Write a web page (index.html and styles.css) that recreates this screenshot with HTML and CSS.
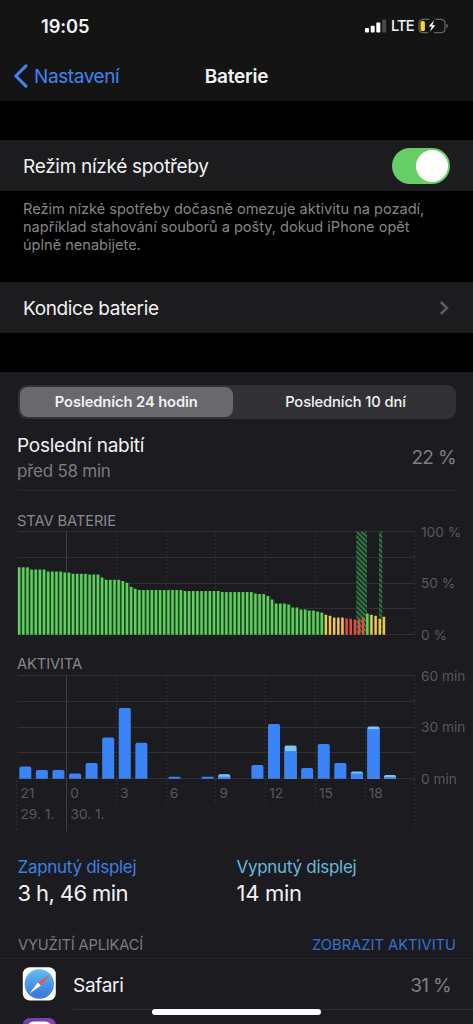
FILE: index.html
```html
<!DOCTYPE html>
<html lang="cs">
<head>
<meta charset="utf-8">
<title>Baterie</title>
<link rel="stylesheet" href="styles.css">
</head>
<body>
<div class="screen">
  <header class="top">
    <div class="status">
      <span class="time">19:05</span>
      <div class="indicators">
        <svg class="signal" width="22" height="14" viewBox="0 0 22 14"><rect x="0" y="9" width="4" height="4.5" rx="1"/><rect x="5.7" y="6.7" width="4" height="6.8" rx="1"/><rect x="11.3" y="3.5" width="4" height="10" rx="1"/><rect class="off" x="17.2" y="0.5" width="4" height="13" rx="1"/></svg>
        <span class="lte">LTE</span>
        <svg class="battery" width="30" height="16" viewBox="0 0 30 16"><path d="M11.5 1.3H5.2Q1 1.3 1 5.2v5.6q0 3.9 4.2 3.900h5M17.500 1.3h5.3Q27 1.3 27 5.2v5.6q0 3.900-4.2 3.900h-6.7" fill="none" stroke="#66655f" stroke-width="1.2"/><path d="M28.4 5.8q1.6.7 1.6 2.2t-1.6 2.2z" fill="#66655f"/><rect x="2.5" y="3" width="4.4" height="10" rx="1.6" fill="#f5d343"/><path d="M16.2 2.2L10.6 8.6h3.2L12 13.8l5.4-6.5h-3.1z" fill="#fff"/></svg>
      </div>
    </div>
    <nav class="nav">
      <a class="back"><svg width="16" height="26" viewBox="0 0 16 26"><path d="M13 2.8L2.8 13 13 23.2" fill="none" stroke="#3f85f0" stroke-width="3.1" stroke-linecap="round" stroke-linejoin="round"/></svg><span class="back-label">Nastavení</span></a>
      <h1 class="title">Baterie</h1>
      <span></span>
    </nav>
  </header>

  <section class="cell power">
    <span class="power-label">Režim nízké spotřeby</span>
    <span class="toggle"><span class="knob"></span></span>
  </section>
  <p class="note">Režim nízké spotřeby dočasně omezuje aktivitu na pozadí,<br>například stahování souborů a pošty, dokud iPhone opět<br>úplně nenabijete.</p>
  <section class="cell health">
    <span class="health-label">Kondice baterie</span>
    <svg width="10" height="16" viewBox="0 0 10 16"><path d="M1.800 2L8 8l-6.200 6" fill="none" stroke="#5c5c60" stroke-width="2.500"/></svg>
  </section>

  <main class="usage">
    <div class="segments">
      <span class="segment selected">Posledních 24 hodin</span>
      <span class="segment other">Posledních 10 dní</span>
    </div>
    <div class="charge">
      <div class="charge-text"><span class="charge-title">Poslední nabití</span><span class="charge-time">před 58 min</span></div>
      <span class="percent charge-level">22 %</span>
    </div>
    <h2 class="heading level-heading">STAV BATERIE</h2>
    <svg class="chart" id="level" width="473" height="116" viewBox="0 526 473 116"></svg>
    <h2 class="heading activity-heading">AKTIVITA</h2>
    <svg class="chart" id="activity" width="473" height="164" viewBox="0 669 473 164"></svg>
    <div class="totals">
      <div class="total"><span class="total-label on">Zapnutý displej</span><span class="total-value v1">3 h, 46 min</span></div>
      <div class="total"><span class="total-label off">Vypnutý displej</span><span class="total-value v2">14 min</span></div>
    </div>
    <div class="apps-head"><h2 class="apps-title">VYUŽITÍ APLIKACÍ</h2><a class="apps-link">ZOBRAZIT AKTIVITU</a></div>
    <div class="app">
      <svg class="app-icon" width="34" height="34" viewBox="0 0 34 34"><defs><linearGradient id="sky" x1="0" y1="0" x2="0" y2="1"><stop offset="0" stop-color="#62bdf0"/><stop offset="1" stop-color="#3470dc"/></linearGradient></defs><rect x=".8" y=".2" width="33" height="33.400" rx="7" fill="#fff"/><circle cx="17.300" cy="17" r="14.700" fill="url(#sky)"/><circle cx="17.300" cy="17" r="13" fill="none" stroke="#a5d4f5" stroke-width="1.300" stroke-dasharray=".4 1.300" opacity=".5"/><path d="M28 7.500L15.800 15.600l3.100 3z" fill="#e1574e"/><path d="M7.400 26.500l8.400-10.900 3.100 3z" fill="#fff"/></svg>
      <div class="app-row"><span class="app-name">Safari</span><span class="percent app-share">31 %</span></div>
    </div>
    <div class="app next">
      <svg width="34" height="34" viewBox="0 0 34 34"><defs><linearGradient id="violet" x1="0" x2="1"><stop offset="0" stop-color="#6145b0"/><stop offset="1" stop-color="#8b3fb0"/></linearGradient></defs><rect x=".8" width="33" height="34" rx="7" fill="url(#violet)"/><rect x="5.500" y="3.600" width="24" height="26" rx="6" fill="#fff"/></svg>
    </div>
  </main>
  <div class="home"></div>
</div>
<script src="charts.js"></script>
</body>
</html>
```

FILE: styles.css
```css
* { box-sizing: border-box; }
body { margin: 0; background: #000; font-family: Inter, "Liberation Sans", sans-serif; color: #f2f2f4; }
.screen { position: relative; width: 473px; height: 1024px; overflow: hidden; display: flex; flex-direction: column; background: #000; }
h1, h2, p { margin: 0; font-weight: 400; }
span, a, h1, h2 { white-space: nowrap; }
.top { height: 101px; background: #141415; flex: none; }
.status { height: 52px; padding: 0 25px 0 41px; display: flex; justify-content: space-between; align-items: center; }
.time { font-size: 18.300px; font-weight: 600; letter-spacing: -0.1px; }
.indicators { display: flex; align-items: center; }
.signal { fill: #fff; }
.signal .off { fill: #48484a; }
.lte { font-size: 14.700px; font-weight: 500; width: 22px; margin: 0 5px 0 4px; letter-spacing: -0.9px; }
.nav { height: 48px; display: grid; grid-template-columns: 1fr auto 1fr; align-items: center; padding: 0 13px; }
.back { display: flex; align-items: center; gap: 5px; color: #3f85f0; }
.back-label { font-size: 19px; letter-spacing: -0.4px; }
.title { font-size: 19px; font-weight: 600; letter-spacing: -0.2px; }
.cell { flex: none; height: 51px; background: #1c1c1e; display: flex; align-items: center; justify-content: space-between; padding: 0 23px; }
.power { margin-top: 39px; padding-top: 1px; }
.power-label, .health-label { font-size: 19px; letter-spacing: -0.3px; }
.health-label { letter-spacing: -0.35px; padding-top: 1px; }
.toggle { width: 58px; height: 36px; padding: 2px; border-radius: 18px; background: #67cd67; display: flex; justify-content: flex-end; }
.knob { width: 32px; height: 32px; border-radius: 50%; background: #fff; }
.note { flex: none; height: 91px; padding: 9px 23px 0; font-size: 14.600px; line-height: 18px; color: #85858a; letter-spacing: -0.02px; white-space: nowrap; }
.health { padding-right: 24px; }
.usage { flex: 1; margin-top: 39px; background: #1c1b1f; display: flex; flex-direction: column; }
.usage > * { flex: none; }
.segments { margin: 13px 17px 0 18px; height: 34px; padding: 2px 2px 2px 1.500px; border-radius: 9px; background: #323236; display: flex; }
.segment { flex: 1; display: flex; align-items: center; justify-content: center; font-size: 14.700px; font-weight: 500; border-radius: 8px; }
.selected { flex: none; width: 213.500px; height: 30px; font-weight: 600; letter-spacing: -0.08px; background: #69696d; }
.other { padding-left: 4px; letter-spacing: -0.1px; }
.charge { margin: 0 17px 0 18px; height: 72px; border-bottom: 1px solid #2b2b2f; display: flex; align-items: center; justify-content: space-between; }
.charge-text { display: flex; flex-direction: column; padding-top: 6px; margin-left: -1px; }
.charge-title { font-size: 19px; line-height: 26px; letter-spacing: -0.25px; }
.charge-time { font-size: 17px; line-height: 24px; color: #7b7b80; letter-spacing: -0.25px; }
.percent { font-size: 19px; color: #7f7f84; letter-spacing: -0.65px; }
.charge-level { padding-top: 5px; }
.heading { padding-left: 17px; font-size: 14.700px; line-height: 20px; color: #88888d; letter-spacing: -0.1px; }
.level-heading { margin-top: 20px; }
.activity-heading { margin-top: 12px; }
.chart { display: block; overflow: visible; font-size: 13.700px; fill: #58585d; }
.level-heading + .chart { margin-top: -5px; }
.activity-heading + .chart { margin-top: -5px; }
.grid { stroke: #303034; stroke-width: 1; fill: none; }
.dash { stroke-dasharray: 2 2; }
.strong { stroke: #404044; }
.green { fill: #62cd60; } .yellow { fill: #eec84a; } .red { fill: #dc4f40; }
.used { fill: #3b84f7; } .idle { fill: #79c7f5; }
.totals { margin-top: 23px; padding-left: 18px; display: grid; grid-template-columns: 219px 1fr; }
.total { display: flex; flex-direction: column; }
.total-label { font-size: 17px; line-height: 23px; letter-spacing: -0.28px; margin-left: -0.5px; }
.total-label.on { color: #3e80e2; } .total-label.off { color: #69b8de; }
.total-value { font-size: 22px; line-height: 29px; letter-spacing: -0.6px; margin: 0 0 1px -0.5px; }
.v2 { letter-spacing: -0.3px; }
.apps-head { height: 50px; padding: 25px 17px 0 18px; display: flex; justify-content: space-between; border-bottom: 1px solid #27272b; font-size: 14.700px; line-height: 22px; }
.apps-title { font-size: inherit; color: #7c7c81; letter-spacing: -0.16px; }
.apps-link { color: #3572d0; }
.app { display: flex; height: 51px; padding: 8px 0 0 22px; gap: 17px; }
.app-row { flex: 1; display: flex; justify-content: space-between; align-items: center; height: 43px; padding: 0 22px 6px 0; border-bottom: 1px solid #303034; }
.app-name { font-size: 19px; letter-spacing: -0.3px; }
.next { height: 20px; }
.home { position: absolute; left: 152px; top: 1009px; width: 169px; height: 6px; border-radius: 3px; background: #fff; }
```

FILE: charts.js
```js
const NS = "http://www.w3.org/2000/svg";
function add(parent, name, attrs, text) {
  const el = document.createElementNS(NS, name);
  for (const key in attrs) el.setAttribute(key, attrs[key]);
  if (text) el.textContent = text;
  parent.appendChild(el);
  return el;
}
const LEFT = 17.5, HOUR = 16.58, RIGHT = 415;

function grid(svg, top, labels) {
  for (let i = 0; i < 5; i++) add(svg, "path", { class: "grid", d: `M${LEFT} ${top + [0, 26, 52, 77, 103][i]}H${RIGHT}` });
  labels.forEach((t, i) => add(svg, "text", { x: 421, y: top + 5.5 + i * 51.3 }, t));
}

const level = document.getElementById("level");
grid(level, 531.5, ["100 %", "50 %", "0 %"]);
for (let k = 0; k < 8; k++) {
  const x = Math.floor(66.7 + k * 49.75) + 0.5;
  add(level, "path", { class: k ? "grid dash" : "grid strong", d: `M${x} 531V635` });
}
const defs = add(level, "defs", {});
const hatch = add(defs, "pattern", { id: "hatch", width: 5, height: 5, patternUnits: "userSpaceOnUse" });
add(hatch, "rect", { width: 5, height: 5, fill: "#1d2f25" });
add(hatch, "path", { d: "M-1 -1L6 6M-1 4L1 6M4 -1L6 1", stroke: "#307c3c", "stroke-width": 1.8 });
add(level, "rect", { x: 356.3, y: 531.5, width: 10.7, height: 103, fill: "url(#hatch)" });
add(level, "rect", { x: 379, y: 531.5, width: 3.3, height: 103, fill: "url(#hatch)" });

// [number of quarter hours, bar height, colour]
const runs = [[3,67.5],[4,65.3],[4,63.3],[2,62.3],[4,61],[3,60.3],[1,57.3],[4,55],[1,53.7],[1,52],[1,48],[1,46],[11,44.7],[9,43.7],[8,42.7],[1,41.3],[2,40.7],[1,38.7],[1,35.3],[3,31.3],[1,30.3],[2,27.3],[2,25.3],[2,24.3],[1,23.3],[1,22.3],
  [1,20,"yellow"],[1,19,"yellow"],[3,17.3,"yellow"],[1,16.3,"red"],[1,16,"red"],[1,15.3,"red"],[1,15,"red"],[1,17.7,"red"],[1,21.3],[1,20,"yellow"],[1,19,"yellow"],[1,16,"yellow"],[1,18,"yellow"]];
let index = 0;
for (const [count, height, color = "green"] of runs)
  for (let n = 0; n < count; n++, index++) {
    const x = LEFT + 0.4 + index * HOUR / 4;
    if (color === "green") add(level, "rect", { x, y: 635 - height, width: 4.15, height, fill: "#1c4522" });
    add(level, "rect", { class: color, x, y: 634.7 - height, width: 2.5, height, rx: 0.5 });
  }

const activity = document.getElementById("activity");
grid(activity, 675.5, ["60 min", "30 min", "0 min"]);
for (let k = -1; k < 8; k++) {
  const x = Math.floor(66.7 + k * 49.75) + 0.5;
  add(activity, "path", { class: k ? "grid dash" : "grid strong", d: `M${x} ${k < 0 ? 780 : 675}V${k < 1 || k === 7 ? 831 : 804}` });
}
// [hour slot, total height, screen-off height]
const bars = [[0,12.3],[1,8.7],[2,8.7],[3,5.3],[4,15.7],[5,41.3],[6,70.7],[7,36],[9,2],[11,2],[12,4.5,2.5],[14,13.7],[15,54.7],[16,33.3,5.7],[17,10.7],[18,34.7],[19,15.7],[20,7.3,2],[21,52.3,2.7],[22,3.7,2]];
for (const [slot, h, off] of bars) {
  const x = 19.3 + slot * HOUR, r = Math.min(1.8, h / 2), y = 778.7 - h;
  add(activity, "path", { class: off ? "idle" : "used", d: `M${x} 778.7V${y + r}q0 ${-r} ${r} ${-r}h${12 - 2 * r}q${r} 0 ${r} ${r}V778.7z` });
  if (off) add(activity, "rect", { class: "used", x, y: y + off, width: 12, height: h - off });
}
["21", "0", "3", "6", "9", "12", "15", "18"].forEach((t, i) => add(activity, "text", { x: 20.5 + i * 49.75, y: 797.5 }, t));
add(activity, "text", { x: 20.5, y: 818.5 }, "29. 1.");
add(activity, "text", { x: 70.5, y: 818.5 }, "30. 1.");
```
